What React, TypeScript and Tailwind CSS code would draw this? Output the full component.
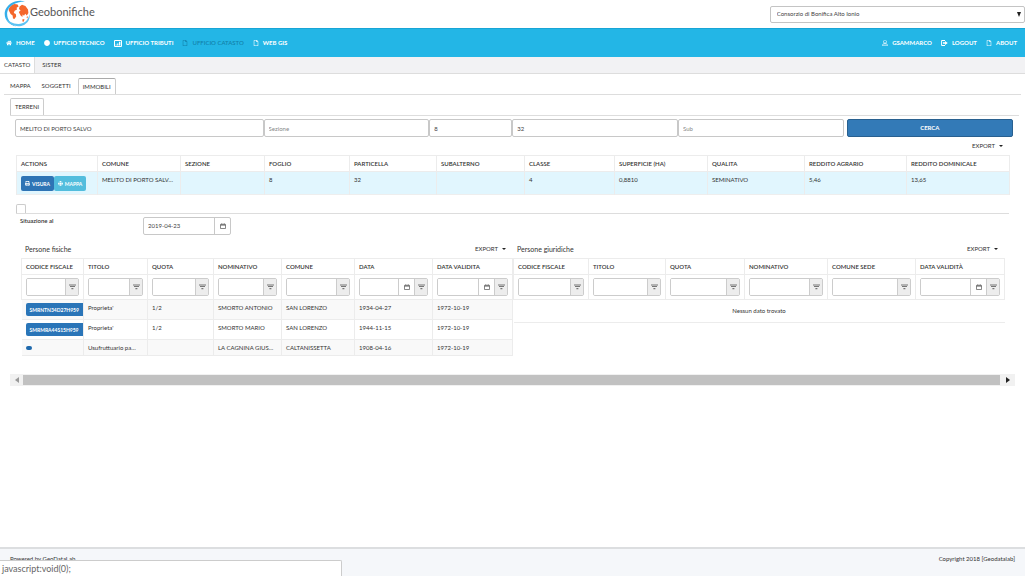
import React, { useState } from "react";
import { FaHome, FaCircle, FaRegFile, FaRegUser, FaPrint, FaGlobe } from "react-icons/fa";

function Logo() {
  return (
    <svg viewBox="0 0 26 28" className="h-7 w-[26px] shrink-0" aria-hidden="true">
      <path d="M4.6 10 C5 7 7.6 4.6 10.6 4 L13.6 4.6 L14.6 6.6 L12.6 7.8 L13 9.6 L10.6 10.8 L9.8 13 L11.8 14 L12.2 16.6 L10.4 19 L9 18.6 L8.6 15.4 L6.6 14 Z" fill="#f4672c" />
      <path d="M15.6 6.6 L18 4.8 L21.4 6 L24 9.4 L24.4 13 L22.8 15.6 L21.2 13.8 L20 15.8 L18.6 14.6 L18.4 17 L16.6 15.6 L14.8 12 L16.6 10.6 L15 9 Z" fill="#f4672c" />
      <path d="M18.2 19.4 L20.4 19 L20 21.2 L18.8 22 Z M22.4 17 L24 16.2 L23.4 18.6 Z" fill="#f4672c" />
      <path d="M21 1.4 C12 -1 2.4 4 .8 12 C-.2 19.6 5 25 12 26.4 C6 23.6 2.6 18.4 3.2 12.4 C4.2 6 11 1.6 21 1.4 Z" fill="#35aeea" />
      <path d="M1.2 17 C4.4 26.8 19 30 24.6 20.4 C25.6 18.4 25.9 16.6 25.6 14 C24.4 20.4 20 24 14.4 24 C8.6 23.8 4 21.4 1.2 17 Z" fill="#5cc3f3" />
    </svg>
  );
}

function ChartIcon() {
  return (
    <svg viewBox="0 0 8 7" className="h-[7px] w-2" aria-hidden="true">
      <path d="M.5 .5h7v6h-7z" fill="none" stroke="currentColor" />
      <path d="M1.6 5.6V4.4h1v1.2zM3.2 5.6V3.4h1.2v2.2zM5 5.6V1.8h1.4v3.8z" fill="currentColor" />
    </svg>
  );
}

function LogoutIcon() {
  return (
    <svg viewBox="0 0 7 6" className="h-1.5 w-[7px]" aria-hidden="true">
      <path d="M4 .5H.6v5H4" fill="none" stroke="currentColor" />
      <path d="M2 2.2h2V.9L6.8 3 4 5.1V3.8H2z" fill="currentColor" />
    </svg>
  );
}

function FilterIcon() {
  return (
    <svg viewBox="0 0 7 6" className="h-1.5 w-[7px]" aria-hidden="true">
      <path d="M0 1h7M1 2.5h5M2.4 4.6h2" stroke="#777" strokeWidth="1.2" />
    </svg>
  );
}

function CalendarIcon() {
  return (
    <svg viewBox="0 0 6 6" className="size-1.5" aria-hidden="true">
      <path d="M.5 1.4h5v4.1h-5zM.5 2.2h5M1.8 .2v1.4M4.2 .2v1.4" fill="none" stroke="#555" strokeWidth=".7" />
    </svg>
  );
}

function Export() {
  return (
    <button type="button" className="flex items-center gap-1 text-[6px] leading-2">
      EXPORT
      <svg viewBox="0 0 4 2" className="h-0.5 w-1" aria-hidden="true">
        <path d="M0 0h4L2 2z" fill="#222" />
      </svg>
    </button>
  );
}

const navIcons = {
  home: <FaHome />,
  dot: <FaCircle />,
  chart: <ChartIcon />,
  file: <FaRegFile />,
  user: <FaRegUser />,
  out: <LogoutIcon />,
};

function NavLink({ icon, label, muted }: { icon: keyof typeof navIcons; label: string; muted?: boolean }) {
  return (
    <a
      href="#"
      className={
        "flex items-center gap-1 whitespace-nowrap text-[6px] leading-2 " +
        (muted ? "font-medium text-[#127fa8]" : "font-bold text-white")
      }
    >
      {navIcons[icon]}
      {label}
    </a>
  );
}

const field = "h-[18px] w-full min-w-0 rounded-xs border border-[#c8c8c8] bg-white px-1 text-[6px] text-[#444] placeholder:text-[#888] outline-none";

function Field({ label, value, span }: { label: string; value?: string; span: string }) {
  return (
    <div className={span}>
      <input aria-label={label} placeholder={label} defaultValue={value} className={field} />
    </div>
  );
}

const th = "h-4 border border-[#ececec] px-1 text-left font-semibold whitespace-nowrap overflow-hidden";
const td = "border-x border-[#ececec] px-1 whitespace-nowrap";

const parcelCols: [string, string, string][] = [
  ["ACTIONS", "w-[81px]", ""],
  ["COMUNE", "w-[83px]", "MELITO DI PORTO SALV…"],
  ["SEZIONE", "w-[84px]", ""],
  ["FOGLIO", "w-[85px]", "8"],
  ["PARTICELLA", "w-[87px]", "32"],
  ["SUBALTERNO", "w-[88px]", ""],
  ["CLASSE", "w-[90px]", "4"],
  ["SUPERFICIE (HA)", "w-[93px]", "0,8810"],
  ["QUALITA", "w-[97px]", "SEMINATIVO"],
  ["REDDITO AGRARIO", "w-[102px]", "5,46"],
  ["REDDITO DOMINICALE", "w-[103px]", "13,65"],
];

function ParcelTable() {
  return (
    <table className="w-full table-fixed border-collapse text-[6px] leading-2">
      <thead>
        <tr>
          {parcelCols.map(([name, w]) => (
            <th key={name} className={th + " " + w}>{name}</th>
          ))}
        </tr>
      </thead>
      <tbody>
        <tr className="h-[23px] border-b border-[#eee] bg-[#e1f6fe]">
          {parcelCols.map(([name, , value], i) => (
            <td key={name} className={td + " align-top pt-1"}>
              {i === 0 ? (
                <div className="flex">
                  <button type="button" className="flex h-[15px] w-[33px] items-center justify-center gap-0.5 rounded-xs bg-[#2e74b5] text-[5px] font-bold text-white">
                    <FaPrint className="size-[5px]" />VISURA
                  </button>
                  <button type="button" className="flex h-[15px] w-8 items-center justify-center gap-0.5 rounded-xs bg-[#53bddd] text-[5px] font-bold text-white">
                    <FaGlobe className="size-[5px]" />MAPPA
                  </button>
                </div>
              ) : (
                value
              )}
            </td>
          ))}
        </tr>
      </tbody>
    </table>
  );
}

type Column = { name: string; w: string; date?: boolean };

function PeopleTable({ title, columns, rows }: { title: string; columns: Column[]; rows: string[][] }) {
  return (
    <section className="min-w-0 text-[6px] leading-2">
      <div className="flex h-[19px] items-center justify-between pr-1.5 pl-1">
        <h2 className="text-[7px]">{title}</h2>
        <Export />
      </div>
      <table className="w-full table-fixed border-collapse">
        <thead>
          <tr>
            {columns.map((c) => (
              <th key={c.name} className={th + " " + c.w}>{c.name}</th>
            ))}
          </tr>
          <tr>
            {columns.map((c) => (
              <td key={c.name} className="h-[25px] border border-[#ececec] px-1">
                <div className="flex h-[18px] overflow-hidden rounded-xs border border-[#ccc]">
                  <input aria-label={"Filter " + c.name} className="w-0 min-w-0 flex-1 bg-white px-0.5 outline-none" />
                  {c.date && (
                    <button type="button" aria-label="Choose date" className="flex w-4 items-center justify-center border-l border-[#ccc]">
                      <CalendarIcon />
                    </button>
                  )}
                  <button type="button" aria-label="Filter" className="flex w-[13px] items-center justify-center border-l border-[#ccc] bg-[#ededed]">
                    <FilterIcon />
                  </button>
                </div>
              </td>
            ))}
          </tr>
        </thead>
        <tbody>
          {rows.length === 0 && (
            <tr className="border-b border-[#ececec]">
              <td colSpan={columns.length} className="h-[23px] text-center">Nessun dato trovato</td>
            </tr>
          )}
          {rows.map((r, i) => (
            <tr key={i} className={"border-b border-[#ececec] " + (r[0] ? "h-5 " : "h-4 ") + (i % 2 === 0 ? "bg-[#f9f9f9]" : "bg-white")}>
              {r.map((v, j) =>
                j > 0 ? (
                  <td key={j} className={td + " align-top pt-1"}>{v}</td>
                ) : v ? (
                  <td key={j} className="pl-1">
                    <button type="button" className="flex h-[13px] w-full items-center rounded-l-xs bg-[#2a75b8] pl-1 text-[5px] font-bold text-white">{v}</button>
                  </td>
                ) : (
                  <td key={j} className="pl-1">
                    <button type="button" aria-label="Dettaglio" className="block h-1 w-1.5 rounded-xs bg-[#1f69ad]" />
                  </td>
                ),
              )}
            </tr>
          ))}
        </tbody>
      </table>
    </section>
  );
}

const physical: Column[] = [
  { name: "CODICE FISCALE", w: "w-[62px]" },
  { name: "TITOLO", w: "w-[64px]" },
  { name: "QUOTA", w: "w-[66px]" },
  { name: "NOMINATIVO", w: "w-[68px]" },
  { name: "COMUNE", w: "w-[73px]" },
  { name: "DATA", w: "w-[78px]", date: true },
  { name: "DATA VALIDITA", w: "w-[80px]", date: true },
];

const legal: Column[] = [
  { name: "CODICE FISCALE", w: "w-[75px]" },
  { name: "TITOLO", w: "w-[77px]" },
  { name: "QUOTA", w: "w-[79px]" },
  { name: "NOMINATIVO", w: "w-[83px]" },
  { name: "COMUNE SEDE", w: "w-[88px]" },
  { name: "DATA VALIDITÀ", w: "w-[89px]", date: true },
];

const people = [
  ["SMRNTN34D27H959", "Proprieta'", "1/2", "SMORTO ANTONIO", "SAN LORENZO", "1934-04-27", "1972-10-19"],
  ["SMRMRA44S15H959", "Proprieta'", "1/2", "SMORTO MARIO", "SAN LORENZO", "1944-11-15", "1972-10-19"],
  ["", "Usufruttuario pa…", "", "LA CAGNINA GIUS…", "CALTANISSETTA", "1908-04-16", "1972-10-19"],
];

export default function App() {
  const [date, setDate] = useState("2019-04-23");
  return (
    <div className="flex min-h-screen flex-col bg-white font-['Lato',sans-serif] text-[6px] leading-2 text-[#333]">
      <header className="flex h-7 items-center justify-between pl-1">
        <div className="flex items-center">
          <Logo />
          <h1 className="pb-1 text-[11px] leading-4 text-[#555]">Geobonifiche</h1>
        </div>
        <div className="relative w-1/4">
          <select aria-label="Consorzio" className="h-[17px] w-full appearance-none rounded-xs border border-[#c4c4c4] bg-white px-1.5 text-[6px] text-[#444]">
            <option>Consorzio di Bonifica Alto Ionio</option>
          </select>
          <svg viewBox="0 0 4 5" className="pointer-events-none absolute top-1.5 right-1 h-[5px] w-1" aria-hidden="true">
            <path d="M0 0h4L2 5z" fill="#222" />
          </svg>
        </div>
      </header>

      <nav className="flex h-[29px] items-center justify-between border-t border-[#18a5d6] bg-[#23b6e6] pr-2 pl-1.5">
        <div className="flex items-center gap-[9px]">
          <NavLink icon="home" label="HOME" />
          <NavLink icon="dot" label="UFFICIO TECNICO" />
          <NavLink icon="chart" label="UFFICIO TRIBUTI" />
          <NavLink icon="file" label="UFFICIO CATASTO" muted />
          <NavLink icon="file" label="WEB GIS" />
        </div>
        <div className="flex items-center gap-[9px]">
          <NavLink icon="user" label="GSAMMARCO" />
          <NavLink icon="out" label="LOGOUT" />
          <NavLink icon="file" label="ABOUT" />
        </div>
      </nav>

      <div className="flex h-[17px] border-b border-[#ddd] bg-[#f2f2f4]">
        <a href="#" className="flex items-center border-r border-[#ddd] bg-white px-1">CATASTO</a>
        <a href="#" className="flex items-center px-[7px]">SISTER</a>
      </div>

      <main className="flex-1">
        <div className="mr-1 ml-1 flex h-[21px] items-end border-b border-[#ddd] pl-0.5">
          <a href="#" className="flex h-4 items-center px-1">MAPPA</a>
          <a href="#" className="flex h-4 items-center px-[7px]">SOGGETTI</a>
          <a href="#" className="flex h-4 items-center rounded-t-xs border border-b-0 border-t-[#aaa] border-x-[#ccc] px-1">IMMOBILI</a>
        </div>
        <div className="mr-1.5 ml-2.5 flex h-[21px] items-end border-b border-[#ddd]">
          <a href="#" className="flex h-[17px] items-center rounded-t-xs border border-b-0 border-[#ccc] px-1">TERRENI</a>
        </div>

        <form className="mr-3 ml-[15px] mt-[3px] flex gap-[3px]" onSubmit={(e) => e.preventDefault()}>
          <div className="grid flex-1 grid-cols-10">
            <Field label="Comune" value="MELITO DI PORTO SALVO" span="col-span-3" />
            <Field label="Sezione" span="col-span-2" />
            <Field label="Foglio" value="8" span="col-span-1" />
            <Field label="Particella" value="32" span="col-span-2" />
            <Field label="Sub" span="col-span-2" />
          </div>
          <button type="submit" className="w-1/6 rounded-xs border border-[#286090] bg-[#337ab7] text-[6px] font-bold text-white">CERCA</button>
        </form>

        <div className="mr-4 ml-4">
          <div className="flex h-[18px] items-center justify-end pr-1.5">
            <Export />
          </div>
          <ParcelTable />
          <div className="mt-[9px] flex border-b border-[#ddd]">
            <span className="h-[9px] w-2.5 rounded-t-xs border border-b-0 border-[#ccc]" />
          </div>
          <div className="flex pt-[3px] pl-1">
            <label htmlFor="situation-date" className="w-[123px] font-semibold">Situazione al</label>
            <div className="flex h-[18px] w-[88px] overflow-hidden rounded-xs border border-[#c8c8c8]">
              <input id="situation-date" value={date} onChange={(e) => setDate(e.target.value)} className="min-w-0 flex-1 px-1 text-[#444] outline-none" />
              <button type="button" aria-label="Choose date" className="flex w-4 items-center justify-center border-l border-[#c8c8c8]">
                <CalendarIcon />
              </button>
            </div>
          </div>
        </div>

        <div className="mr-[21px] ml-[21px] mt-1 grid grid-cols-2 items-start gap-px">
          <PeopleTable title="Persone fisiche" columns={physical} rows={people} />
          <PeopleTable title="Persone giuridiche" columns={legal} rows={[]} />
        </div>

        <div className="mr-2.5 ml-2.5 mt-[18px] flex h-3 items-center bg-[#f1f1f1]">
          <button type="button" aria-label="Scroll left" className="flex w-[13px] justify-center">
            <svg viewBox="0 0 4 6" className="h-1.5 w-1"><path d="M4 0v6L0 3z" fill="#999" /></svg>
          </button>
          <div className="h-2.5 flex-1 bg-[#c1c1c1]" />
          <button type="button" aria-label="Scroll right" className="flex w-[15px] justify-center">
            <svg viewBox="0 0 4 6" className="h-1.5 w-1"><path d="M0 0v6l4-3z" fill="#222" /></svg>
          </button>
        </div>
      </main>

      <footer className="flex h-[29px] justify-between border-t-2 border-[#dcdee0] bg-[#f5f7fa] px-2.5 pt-1.5">
        <span>Powered by GeoDataLab</span>
        <span>Copyright 2018 [Geodatalab]</span>
      </footer>

      <div className="fixed bottom-0 left-0 h-4 w-1/3 rounded-tr-xs border-t border-r border-[#ccc] bg-white px-0.5 text-[9px] leading-4 text-[#666]">
        javascript:void(0);
      </div>
    </div>
  );
}
